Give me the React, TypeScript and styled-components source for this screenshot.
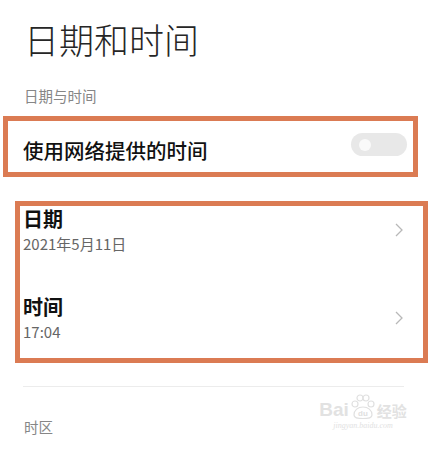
import React from 'react'
import styled, { createGlobalStyle } from 'styled-components'

const GlobalStyle = createGlobalStyle`
  body {
    margin: 0;
    background: #ffffff;
    font-family: 'Noto Sans CJK SC', 'Noto Sans', sans-serif;
  }
`

const Page = styled.div`
  position: relative;
  width: 435px;
  height: 452px;
  overflow: hidden;
  background: #fff;
`

const Title = styled.h1`
  margin: 0;
  padding: 21px 0 0 24px;
  font-size: 35px;
  line-height: 1;
  font-weight: 300;
  color: #262626;
`

const SectionLabel = styled.div<{ top: number }>`
  margin-top: ${(p) => p.top}px;
  padding-left: 24px;
  font-size: 14.5px;
  line-height: 1;
  color: #868686;
`

const Highlight = styled.div<{ left: number; width: number }>`
  box-sizing: border-box;
  margin-left: ${(p) => p.left}px;
  width: ${(p) => p.width}px;
  border: 5px solid #db7b53;
`

const SwitchRow = styled.div`
  display: flex;
  align-items: center;
  justify-content: space-between;
  height: 51px;
  padding: 0 6px 0 15px;
`

const SwitchLabel = styled.span`
  padding-top: 9px;
  font-size: 20.5px;
  line-height: 1;
  font-weight: 500;
  color: #111;
`

const Switch = styled.div`
  position: relative;
  width: 56px;
  height: 23px;
  border-radius: 12px;
  background: #e8e8e8;
  margin-top: -3px;
`

const Knob = styled.span`
  position: absolute;
  left: 8px;
  top: 5.5px;
  width: 12px;
  height: 12px;
  border-radius: 50%;
  background: #fafafa;
`

const List = styled.div`
  display: flex;
  flex-direction: column;
  gap: 46px;
  padding: 3px 20px 19px 3px;
`

const ItemRow = styled.div`
  display: flex;
  align-items: center;
  justify-content: space-between;
`

const ItemText = styled.div`
  display: flex;
  flex-direction: column;
  gap: 7px;
`

const ItemTitle = styled.span`
  font-size: 20px;
  line-height: 1;
  font-weight: 700;
  color: #111;
`

const ItemValue = styled.span`
  font-size: 15px;
  line-height: 1;
  color: #666;
`

const Divider = styled.div`
  margin: 23px 31px 0 23px;
  height: 1px;
  background: #ececec;
`

const Watermark = styled.div`
  position: absolute;
  left: 318px;
  top: 394px;
  width: 90px;
  display: flex;
  flex-direction: column;
  align-items: center;
  color: #e2e2e2;
`

const MarkLine = styled.div`
  display: flex;
  align-items: flex-end;
  gap: 1px;
  font-family: 'Liberation Sans', sans-serif;
  font-size: 19px;
  font-weight: 700;
  line-height: 1;
`

const MarkCjk = styled.span`
  font-family: 'Noto Sans CJK SC', sans-serif;
  font-size: 15px;
  margin-bottom: 1px;
`

const MarkUrl = styled.div`
  font-family: 'Liberation Serif', serif;
  font-style: italic;
  font-size: 8px;
  line-height: 1;
  margin-top: 3px;
`

const Chevron = () => (
  <svg width="8" height="14" viewBox="0 0 8 14" fill="none">
    <path d="M1 1l6 6-6 6" stroke="#b8b8b8" strokeWidth="1.3" />
  </svg>
)

const Paw = () => (
  <svg width="26" height="25" viewBox="0 0 26 25" fill="none" stroke="#e0e0e0" strokeWidth="1.2">
    <circle cx="5" cy="10" r="3" />
    <circle cx="10" cy="4" r="3" />
    <circle cx="16" cy="4" r="3" />
    <circle cx="21" cy="10" r="3" />
    <path d="M4 21c0-5 4-8 9-8s9 3 9 8c0 3-3 3.5-9 3.5S4 24 4 21z" />
    <text x="13" y="22" textAnchor="middle" fontSize="8" fontFamily="Liberation Sans" fontWeight="700" fill="#e0e0e0" stroke="none">
      du
    </text>
  </svg>
)

const items = [
  { title: '日期', value: '2021年5月11日' },
  { title: '时间', value: '17:04' },
]

const App = (): JSX.Element => {
  return (
    <Page>
      <GlobalStyle />
      <Title>日期和时间</Title>
      <SectionLabel top={33}>日期与时间</SectionLabel>

      <div style={{ marginTop: 12 }}>
        <Highlight left={3} width={415}>
          <SwitchRow>
            <SwitchLabel>使用网络提供的时间</SwitchLabel>
            <Switch>
              <Knob />
            </Switch>
          </SwitchRow>
        </Highlight>
      </div>

      <div style={{ marginTop: 24 }}>
        <Highlight left={15} width={413}>
          <List>
            {items.map((item) => (
              <ItemRow key={item.title}>
                <ItemText>
                  <ItemTitle>{item.title}</ItemTitle>
                  <ItemValue>{item.value}</ItemValue>
                </ItemText>
                <Chevron />
              </ItemRow>
            ))}
          </List>
        </Highlight>
      </div>

      <Divider />
      <SectionLabel top={33}>时区</SectionLabel>

      <Watermark>
        <MarkLine>
          Bai
          <Paw />
          <MarkCjk>经验</MarkCjk>
        </MarkLine>
        <MarkUrl>jingyan.baidu.com</MarkUrl>
      </Watermark>
    </Page>
  )
}

export default App
